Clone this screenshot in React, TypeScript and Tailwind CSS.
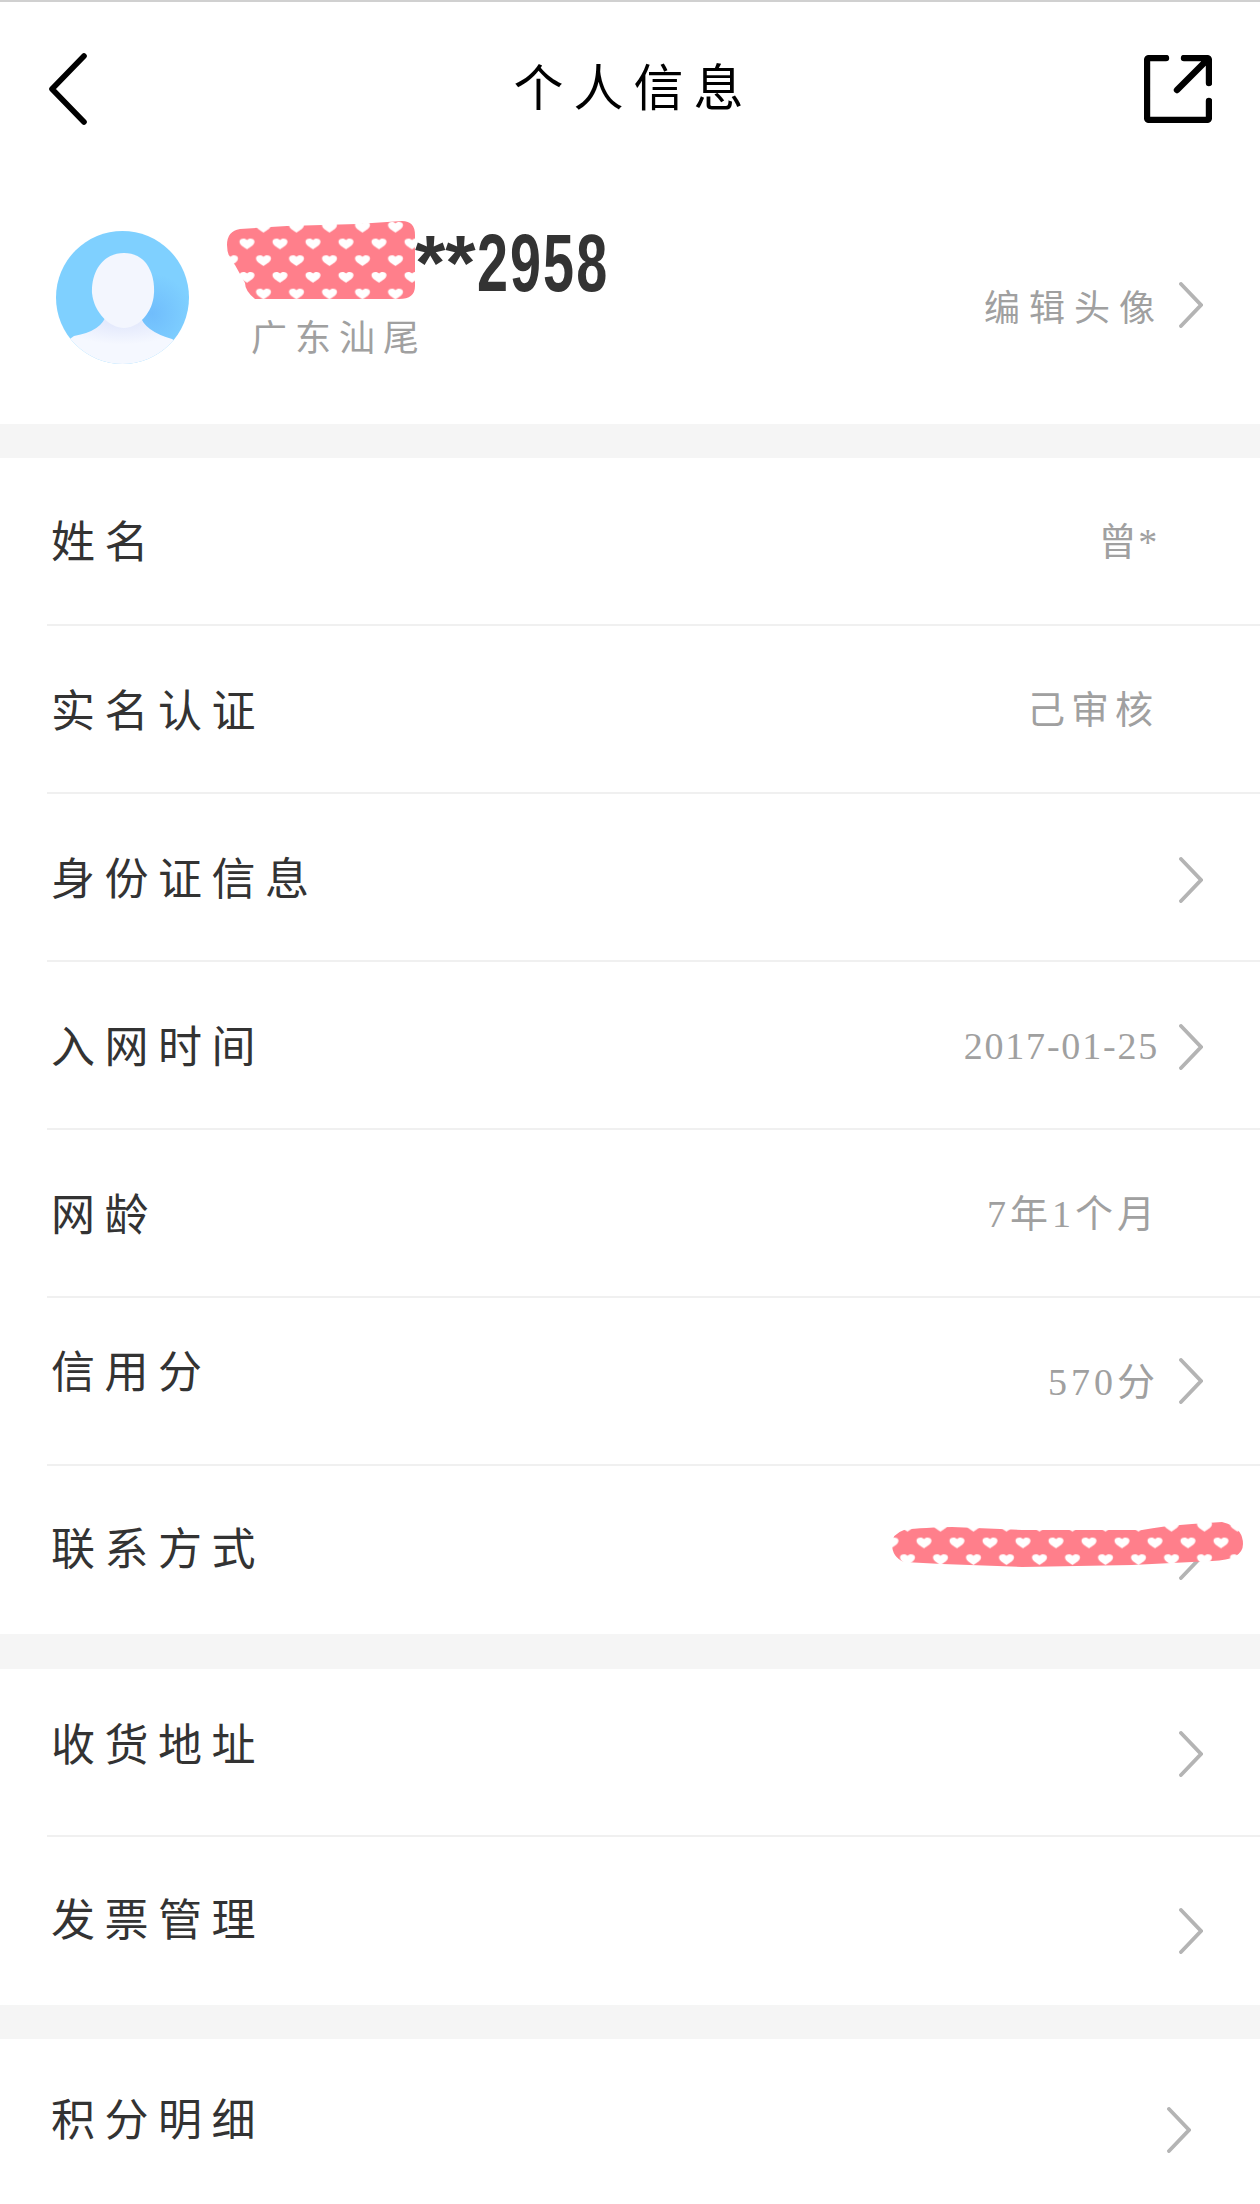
import React from 'react';

const Chevron = ({ className = '' }: { className?: string }) => (
  <svg viewBox="0 0 24 46" className={`w-[24px] h-[46px] shrink-0 ${className}`} fill="none">
    <path d="M2 2 L22 23 L2 44" stroke="#b4b4b4" strokeWidth="3.8" strokeLinecap="round" strokeLinejoin="miter" />
  </svg>
);

const Hearts = ({ id, x, y }: { id: string; x: number; y: number }) => (
  <pattern id={id} x={x} y={y} width="33" height="33.4" patternUnits="userSpaceOnUse">
    <rect width="33" height="33.4" fill="#ff7f8b" />
    <path d="M8.25 13.8 C5 11.5 0.75 9.5 0.75 6 C0.75 2.5 6.5 1.8 8.25 4.5 C10 1.8 15.75 2.5 15.75 6 C15.75 9.5 11.5 11.5 8.25 13.8 Z" fill="#fff" />
    <path d="M24.75 30.5 C21.5 28.2 17.25 26.2 17.25 22.7 C17.25 19.2 23 18.5 24.75 21.2 C26.5 18.5 32.25 19.2 32.25 22.7 C32.25 26.2 28 28.2 24.75 30.5 Z" fill="#fff" />
  </pattern>
);

const Avatar = () => (
  <svg viewBox="0 0 133 133" className="w-[133px] h-[133px] shrink-0">
    <defs>
      <radialGradient id="shade" cx="0.72" cy="0.62" r="0.3">
        <stop offset="0" stopColor="#70bdfc" />
        <stop offset="1" stopColor="#7fd0ff" />
      </radialGradient>
      <radialGradient id="neck" cx="0.5" cy="0.1" r="0.5">
        <stop offset="0" stopColor="#dfe5fb" />
        <stop offset="1" stopColor="#f5f8ff" />
      </radialGradient>
      <clipPath id="round">
        <circle cx="66.5" cy="66.5" r="66.5" />
      </clipPath>
    </defs>
    <g clipPath="url(#round)">
      <rect width="133" height="133" fill="url(#shade)" />
      <path d="M0 118 L18 105 Q46 100 50 84 L84 84 Q88 100 116 108 L133 118 L133 133 L0 133 Z" fill="url(#neck)" />
      <path d="M68 22 C90 22 99 42 98 62 C97 82 82 97 68 97 C54 97 38 82 36 62 C35 42 46 22 68 22 Z" fill="#f3f6fe" />
    </g>
  </svg>
);

type RowProps = {
  label: string;
  value?: string;
  arrow?: boolean;
  last?: boolean;
  labelClass?: string;
  valueClass?: string;
  arrowClass?: string;
  children?: React.ReactNode;
};

const Row = ({ label, value, arrow = true, last = false, labelClass = '', valueClass = 'tracking-[1.8px]', arrowClass = '', children }: RowProps) => (
  <div className={`relative ml-[47px] h-[168px] pr-[57px] flex items-center justify-between ${last ? '' : 'border-b-2 border-[#f0f0f0]'}`}>
    <span className={`text-[44px] leading-[52px] tracking-[9.5px] font-normal text-[#333] pl-[4px] ${labelClass}`}>{label}</span>
    <div className="flex items-center">
      {value && (
        <span className={`mt-[2px] font-['Liberation_Serif','Noto_Sans_CJK_SC',serif] text-[38px] leading-[44px] text-[#a0a0a0] ${valueClass}`}>
          {value}
        </span>
      )}
      <Chevron className={`ml-[20px] ${arrow ? '' : 'invisible'} ${arrowClass}`} />
    </div>
    {children}
  </div>
);

export default function App() {
  return (
    <div className="w-[1260px] h-[2204px] overflow-hidden bg-white font-['Noto_Sans_CJK_SC',sans-serif]">
      <div className="h-[170px] border-t-2 border-[#d0d0d0] pt-[5px] pl-[49px] pr-[48px] flex items-center justify-between">
        <svg viewBox="0 0 38 72" className="w-[38px] h-[72px]" fill="none">
          <path d="M35 3 L3 36 L35 69" stroke="#000" strokeWidth="5.6" strokeLinecap="round" strokeLinejoin="round" />
        </svg>
        <span className="ml-[36px] mb-[10px] text-[50px] leading-[56px] tracking-[10px] text-black">个人信息</span>
        <svg viewBox="0 0 68 68" className="w-[68px] h-[68px]" fill="none">
          <path
            d="M22 3 H6 Q3 3 3 6 V62 Q3 65 6 65 H62 Q65 65 65 62 V46 M40 3 H62 Q65 3 65 6 V28 M63 5 L33 35"
            stroke="#000"
            strokeWidth="6.4"
            strokeLinecap="round"
            strokeLinejoin="round"
          />
        </svg>
      </div>

      <div className="h-[254px] pl-[56px] pr-[57px] flex items-center">
        <Avatar />
        <div className="ml-[38px] flex flex-col mt-[-14px]">
          <div className="flex items-end h-[78px]">
            <svg viewBox="0 0 188 78" className="w-[188px] h-[78px] mb-[3px] shrink-0">
              <defs>
                <Hearts id="hearts-a" x={11.75} y={14.65} />
              </defs>
              <path
                d="M13 8 L60 5 L130 3 L175 0 Q188 0 188 14 L188 65 Q188 78 172 78 L28 78 Q18 70 18 62 L8 44 Q0 36 0 24 Q0 10 13 8 Z"
                fill="url(#hearts-a)"
              />
            </svg>
            <span className="font-['Liberation_Sans',sans-serif] font-bold text-[78px] leading-[78px] text-[#333] whitespace-nowrap w-[62px] shrink-0">
              **
            </span>
            <span className="inline-block origin-left scale-x-[0.68] font-['Liberation_Sans',sans-serif] font-bold text-[82px] leading-[78px] tracking-[3px] text-[#333] whitespace-nowrap w-[130px]">
              2958
            </span>
          </div>
          <span className="ml-[24px] mt-[12px] text-[36px] leading-[42px] tracking-[8px] text-[#a0a0a0]">广东汕尾</span>
        </div>
        <div className="ml-auto flex items-center mt-[16px]">
          <span className="text-[36px] leading-[42px] tracking-[9px] text-[#a0a0a0]">编辑头像</span>
          <Chevron className="ml-[15px]" />
        </div>
      </div>

      <div className="h-[34px] bg-[#f5f5f5]" />

      <Row label="姓名" value="曾*" arrow={false} labelClass="mb-[4px]" />
      <Row label="实名认证" value="己审核" arrow={false} labelClass="mb-[2px]" valueClass="tracking-[6px]" />
      <Row label="身份证信息" labelClass="mb-[3px]" arrowClass="mt-[6px]" />
      <Row label="入网时间" value="2017-01-25" labelClass="mb-[2px]" arrowClass="mt-[4px]" />
      <Row label="网龄" value="7年1个月" arrow={false} labelClass="mb-[2px]" valueClass="tracking-[4px]" />
      <Row label="信用分" value="570分" labelClass="mb-[25px]" valueClass="tracking-[4px]" />
      <Row label="联系方式" last labelClass="mb-[9px]" arrowClass="mt-[14px]">
        <svg viewBox="0 0 351 45" className="absolute left-[845px] top-[56px] w-[351px] h-[45px]">
          <defs>
            <Hearts id="hearts-b" x={23.75} y={12.65} />
          </defs>
          <path
            d="M12 8 Q20 6 60 5 L130 8 L250 8 Q270 4 300 2 L330 0 Q351 5 351 22 Q351 38 320 39 L240 43 L130 45 L50 42 L12 40 Q0 35 0 22 Q0 12 12 8 Z"
            fill="url(#hearts-b)"
          />
        </svg>
      </Row>

      <div className="h-[35px] bg-[#f5f5f5]" />

      <Row label="收货地址" labelClass="mb-[20px]" arrowClass="mt-[4px]" />
      <Row label="发票管理" last labelClass="mb-[8px]" arrowClass="mt-[20px]" />

      <div className="h-[34px] bg-[#f5f5f5]" />

      <Row label="积分明细" last labelClass="mb-[12px]" arrowClass="mt-[14px] mr-[12px]" />
    </div>
  );
}
